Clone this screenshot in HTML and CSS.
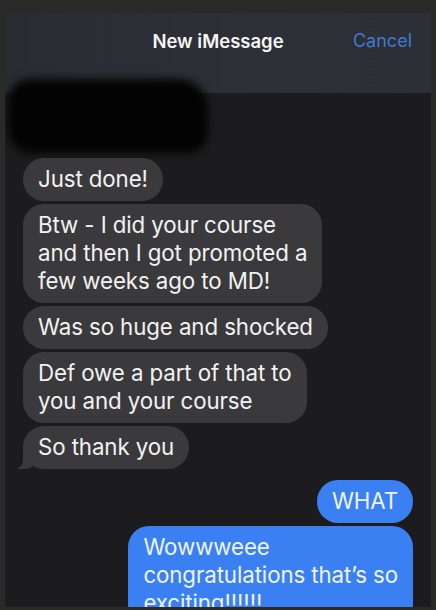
FILE: index.html
```html
<!DOCTYPE html>
<html lang="en">
<head>
    <meta charset="UTF-8">
    <meta name="viewport" content="width=device-width, initial-scale=1.0">
    <title>New iMessage</title>
    <link rel="stylesheet" href="styles.css">
</head>
<body>
    <div class="screen">
        <div class="header">
            <span class="title">New iMessage</span>
            <a class="cancel" href="#">Cancel</a>
        </div>
        <div class="redacted"></div>
        <div class="thread">
            <div class="bubble in">Just done!</div>
            <div class="bubble in">Btw - I did your course<br>and then I got promoted a<br>few weeks ago to MD!</div>
            <div class="bubble in">Was so huge and shocked</div>
            <div class="bubble in">Def owe a part of that to<br>you and your course</div>
            <div class="bubble in last">So thank you</div>
            <div class="bubble out first">WHAT</div>
            <div class="bubble out">Wowwweee<br>congratulations that’s so<br>exciting!!!!!!</div>
        </div>
    </div>
</body>
</html>
```

FILE: styles.css
```css
body {
    margin: 0;
    padding: 0;
    background-color: #2a2a28;
    font-family: Inter, "Liberation Sans", Arial, sans-serif;
    overflow: hidden;
}
.screen {
    position: relative;
    margin: 13px 5px 0 5px;
    height: 594px;
    background-color: #1c1c1e;
    overflow: hidden;
}
.header {
    position: relative;
    height: 80px;
    background: linear-gradient(90deg, #2a2c32, #2d3037 60%, #2c2f35);
    display: flex;
    justify-content: center;
}
.title {
    margin-top: 17px;
    color: #f5f5f5;
    font-size: 18.5px;
    font-weight: 600;
}
.cancel {
    position: absolute;
    top: 17px;
    right: 19px;
    color: #3f7ad0;
    font-size: 18px;
    text-decoration: none;
}
.redacted {
    position: absolute;
    top: 66px;
    left: 3px;
    width: 200px;
    height: 74px;
    background: #030303;
    border-radius: 22px 30px 20px 24px;
    filter: blur(4px);
}
.thread {
    display: flex;
    flex-direction: column;
    align-items: flex-start;
    gap: 3px;
    padding: 65px 18px 0 18px;
}
.bubble {
    position: relative;
    padding: 7px 15px 8px 15px;
    border-radius: 21px;
    font-size: 22.3px;
    line-height: 28px;
    letter-spacing: -0.1px;
    color: #f2f2f2;
    white-space: nowrap;
}
.in {
    background-color: #3a3a3d;
}
.in.last::before {
    content: "";
    position: absolute;
    left: -5px;
    bottom: 0;
    width: 20px;
    height: 18px;
    background-color: #3a3a3d;
    border-bottom-right-radius: 14px 12px;
}
.in.last::after {
    content: "";
    position: absolute;
    left: -12px;
    bottom: -1px;
    width: 12px;
    height: 20px;
    background-color: #1c1c1e;
    border-bottom-right-radius: 10px;
}
.out {
    align-self: flex-end;
    background-color: #3a80f2;
    color: #eef4ff;
}
.out.first {
    margin-top: 8px;
}
```
